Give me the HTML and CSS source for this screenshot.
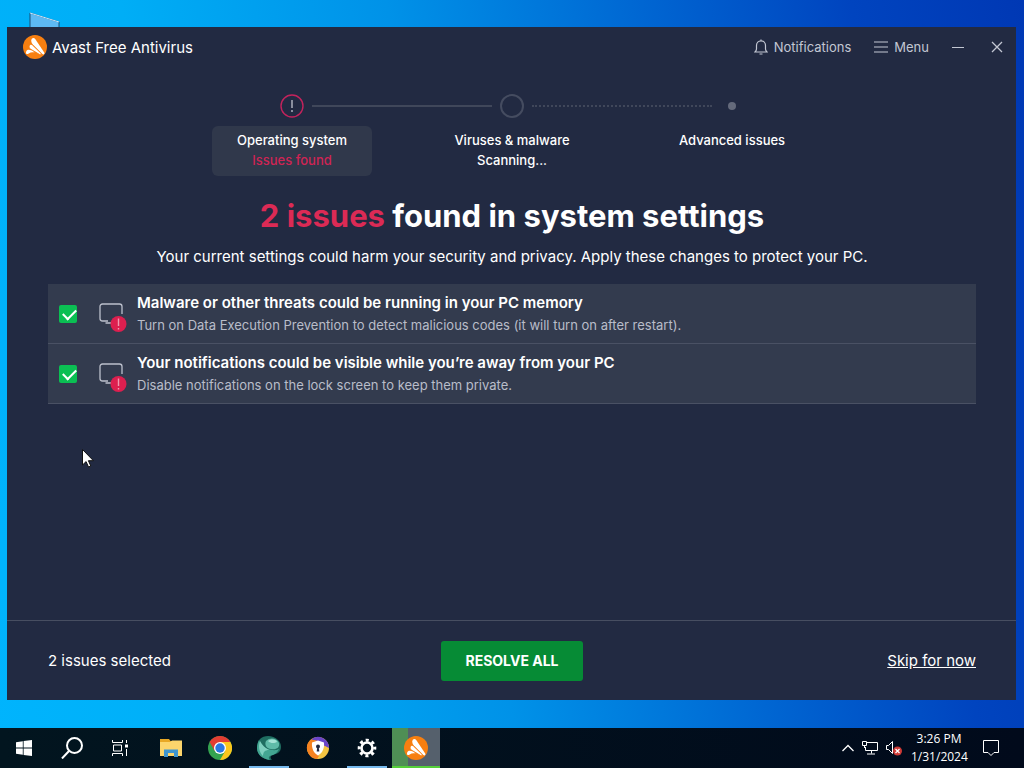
FILE: index.html
```html
<!DOCTYPE html>
<html lang="en">
<head>
    <meta charset="UTF-8">
    <meta name="viewport" content="width=device-width, initial-scale=1.0">
    <title>Avast Free Antivirus</title>
    <link rel="stylesheet" href="styles.css">
</head>
<body>
    <!-- Shared icons -->
    <svg class="sprite" aria-hidden="true">
        <symbol id="icon-avast" viewBox="0 0 24 24">
            <circle cx="12" cy="12" r="12" fill="#f77f10"/>
            <path d="M8.300 5.200c.2-2.300 2.600-3 3.900-1.200l9 13.600c.8 1.500-.6 2.400-1.800 1.500L9.600 9.200C8.500 8 8.200 6.700 8.300 5.200z" fill="#fff"/>
            <path d="M6.300 10.800c.5-1.500 2-1.700 3.100-.8l8.600 8.300c.8.900-.2 1.800-1.200 1.300L7.500 14.100c-1.200-.9-1.600-1.900-1.200-3.300z" fill="#fff" stroke="#f77f10" stroke-width=".8"/>
            <path d="M4.900 14.700c2.100-.4 5.100 1 6.800 3-2-.7-4.300-.3-6 .9-1.400.9-2.600.5-2.700-.5-.1-1.500.6-3.100 1.900-3.400z" fill="#fff"/>
        </symbol>
        <symbol id="icon-pc-alert" viewBox="0 -6 30 38">
            <path d="M9 20H3.500A2.500 2.500 0 0 1 1 17.500v-12A2.500 2.500 0 0 1 3.500 3h17A2.500 2.500 0 0 1 23 5.500V13M6.500 22H12" fill="none" stroke="#bcc0cc" stroke-width="1.300"/>
            <circle cx="19.500" cy="23" r="8" fill="#dc1f4f"/>
            <path d="M19.500 17.500v7.500M19.500 27v1.500" stroke="#f09ab0" stroke-width="1.400"/>
        </symbol>
    </svg>

    <div class="desktop">
        <svg class="desktop-icon" viewBox="0 0 32 24" aria-hidden="true">
            <path d="M1 1l29 9v14H1z" fill="#5db9f3" stroke="#1b4d74"/>
            <path d="M1 1l29 9" stroke="#c9e9ff"/>
        </svg>

        <div class="window">
            <header class="titlebar">
                <svg class="logo" aria-hidden="true"><use href="#icon-avast"/></svg>
                <span class="app-name">Avast Free Antivirus</span>
                <nav class="title-actions">
                    <button type="button" class="title-btn">
                        <svg width="14" height="16" viewBox="0 0 14 16" fill="none" stroke="currentColor" aria-hidden="true">
                            <path d="M7 .5v1.300M1 13h12c-1-1-1.500-1.800-1.500-3V6.500a4.500 4.700 0 0 0-9 0V10c0 1.200-.5 2-1.500 3zM5.500 15h3" stroke-width="1.200"/>
                        </svg>
                        Notifications
                    </button>
                    <button type="button" class="title-btn">
                        <svg width="14" height="12" viewBox="0 0 14 12" stroke="currentColor" aria-hidden="true">
                            <path d="M0 1h14M0 6h14M0 11h14" stroke-width="1.200"/>
                        </svg>
                        Menu
                    </button>
                    <button type="button" class="window-btn" aria-label="Minimize">
                        <svg width="12" height="12" viewBox="0 0 12 12" stroke="currentColor"><path d="M0 6.500h12"/></svg>
                    </button>
                    <button type="button" class="window-btn" aria-label="Close">
                        <svg width="12" height="12" viewBox="0 0 12 12" stroke="currentColor"><path d="M1 1l10 10M11 1L1 11" stroke-width="1.300"/></svg>
                    </button>
                </nav>
            </header>

            <main class="content">
                <section class="steps">
                    <div class="track">
                        <svg class="marker" viewBox="0 0 24 24" aria-hidden="true">
                            <circle cx="12" cy="12" r="11" fill="none" stroke="#c3235c" stroke-width="1.400"/>
                            <path d="M12 6v8M12 16v2" stroke="#a5a9b6" stroke-width="1.600"/>
                        </svg>
                        <span class="line"></span>
                        <svg class="marker" viewBox="0 0 24 24" aria-hidden="true">
                            <circle cx="12" cy="12" r="11" fill="none" stroke="#454c60" stroke-width="2"/>
                        </svg>
                        <span class="line dotted"></span>
                        <svg class="marker" viewBox="0 0 24 24" aria-hidden="true">
                            <circle cx="12" cy="12" r="4" fill="#646a7b"/>
                        </svg>
                    </div>
                    <ol class="labels">
                        <li class="active">Operating system<span class="status">Issues found</span></li>
                        <li>Viruses &amp; malware<span>Scanning...</span></li>
                        <li>Advanced issues</li>
                    </ol>
                </section>

                <h1><span class="count">2 issues</span> found in system settings</h1>
                <p class="lead">Your current settings could harm your security and privacy. Apply these changes to protect your PC.</p>

                <ul class="issues">
                    <li>
                        <input type="checkbox" id="issue-memory" checked>
                        <svg class="issue-icon" aria-hidden="true"><use href="#icon-pc-alert"/></svg>
                        <label for="issue-memory">
                            <strong>Malware or other threats could be running in your PC memory</strong>
                            <span>Turn on Data Execution Prevention to detect malicious codes (it will turn on after restart).</span>
                        </label>
                    </li>
                    <li>
                        <input type="checkbox" id="issue-notifications" checked>
                        <svg class="issue-icon" aria-hidden="true"><use href="#icon-pc-alert"/></svg>
                        <label for="issue-notifications">
                            <strong>Your notifications could be visible while you’re away from your PC</strong>
                            <span>Disable notifications on the lock screen to keep them private.</span>
                        </label>
                    </li>
                </ul>
            </main>

            <footer class="actions">
                <span>2 issues selected</span>
                <button type="button" class="resolve">RESOLVE ALL</button>
                <a href="#" class="skip">Skip for now</a>
            </footer>
        </div>

        <div class="taskbar">
            <button type="button" aria-label="Start">
                <svg width="16" height="16" viewBox="0 0 16 16" fill="#fff"><path d="M0 2.200l6.800-1v6.400H0zM7.600 1.100L16 0v7.600H7.600zM0 8.400h6.800v6.400l-6.800-1zM7.600 8.400H16V16l-8.400-1.100z"/></svg>
            </button>
            <button type="button" aria-label="Search">
                <svg width="22" height="22" viewBox="0 0 22 22" fill="none" stroke="#fff" stroke-width="2"><circle cx="13.500" cy="8.500" r="7.500"/><path d="M8 14l-7 7.500"/></svg>
            </button>
            <button type="button" aria-label="Task View">
                <svg width="16" height="16" viewBox="0 0 16 16" fill="none" stroke="#fff"><path d="M.5 0v2.500h10V0M.5 16v-2.500h10V16M1.500 5h8v6h-8zM14.500 0v3M14.500 9v7"/><path d="M13 4.500h3v3h-3z" fill="#fff" stroke="none"/></svg>
            </button>
            <button type="button" class="app" aria-label="File Explorer">
                <svg width="22" height="20" viewBox="0 0 22 20"><path d="M0 1h9l1.500 2H22v15H0z" fill="#e8a825"/><path d="M0 4h10l2-1.500h10V18H0z" fill="#fcd56c"/><path d="M4 11.500h14V19h-4v-4H8v4H4z" fill="#3f95cf"/></svg>
            </button>
            <button type="button" class="app" aria-label="Chrome">
                <svg width="24" height="24" viewBox="0 0 24 24"><circle cx="12" cy="12" r="12" fill="#34a350"/><path d="M12 12L1.600 6A12 12 0 0 1 22.400 6z" fill="#e23d32"/><path d="M12 6h10.400A12 12 0 0 1 12 24l5.200-9z" fill="#fbc71d"/><path d="M1.600 6L6.800 15 12 6z" fill="#e23d32"/><circle cx="12" cy="12" r="6" fill="#fff"/><circle cx="12" cy="12" r="4.700" fill="#2a78e4"/></svg>
            </button>
            <button type="button" class="app running" aria-label="Browser">
                <svg width="24" height="24" viewBox="0 0 24 24"><path d="M3 3c4-4 13-4 18 1 4 4 4 10 0 13-3 2-6 1-7 3s0 3 1 4C6 24 0 19 0 12c0-4 1-7 3-9z" fill="#1f6e61"/><path d="M9 5c4-4 11-3 13 2 1 5-3 7-8 6-4 0-7-4-5-8z" fill="#5fbba8"/><path d="M11 5c3-2 8-2 9 1-2 1-6 2-9-1z" fill="#a5e3d6"/><path d="M2 4c2 5 5 8 9 9 4 1 7 2 11 0-2 5-6 6-9 7-2 1-1 3 0 4C5 23 0 18 0 12c0-3 1-6 2-8z" fill="#43a692"/><path d="M3 5c2 4 5 7 9 9-4 0-6 2-6 6C2 16 1 10 3 5z" fill="#7fd0bf"/></svg>
            </button>
            <button type="button" class="app" aria-label="Secure Browser">
                <svg width="24" height="24" viewBox="0 0 24 24"><circle cx="12" cy="12" r="11" fill="#f4c542"/><path d="M5 3.500A11 11 0 0 1 23 12l-6-3-6-4z" fill="#6a45c8"/><path d="M5 3.500A11 11 0 0 0 11 23l2-3-6-6V7l5-2z" fill="#f58220"/><path d="M12 4.500l6 2c.5 5-1 10-6 13-5-3-6.500-8-6-13z" fill="#fff"/><circle cx="12" cy="10.500" r="2" fill="#222a42"/><path d="M11.300 11h1.400l.6 4.500h-2.600z" fill="#222a42"/></svg>
            </button>
            <button type="button" class="app running" aria-label="Settings">
                <svg width="20" height="20" viewBox="0 0 20 20" fill="none" stroke="#fff"><circle cx="10" cy="10" r="5.500" stroke-width="2.600"/><circle cx="10" cy="10" r="7.800" stroke-width="3" stroke-dasharray="3.063 3.063" stroke-dashoffset="1.531"/></svg>
            </button>
            <button type="button" class="app current" aria-label="Avast Free Antivirus">
                <svg width="24" height="24"><use href="#icon-avast"/></svg>
            </button>

            <div class="tray">
                <svg width="12" height="8" viewBox="0 0 12 8" fill="none" stroke="#fff" stroke-width="1.300" aria-hidden="true"><path d="M.5 7L6 1.500 11.500 7"/></svg>
                <svg width="16" height="14" viewBox="0 0 16 14" fill="none" stroke="#fff" aria-hidden="true"><path d="M5 1.500h10.500v8h-12V6M9.500 9.500v3M5 13h8M.5.500h4v4h-4zM2.500 4.500V7"/></svg>
                <svg width="16" height="16" viewBox="0 0 16 16" aria-hidden="true"><path d="M.5 5.500h2l4-4v12l-4-4h-2z" fill="none" stroke="#fff"/><circle cx="11.500" cy="11" r="4.500" fill="#cf3a36"/><path d="M9.500 9l4 4M13.500 9l-4 4" stroke="#fff" stroke-width="1.200"/></svg>
                <time class="clock" datetime="2024-01-31T15:26">3:26 PM<br>1/31/2024</time>
                <svg width="16" height="16" viewBox="0 0 16 16" fill="none" stroke="#fff" aria-hidden="true"><path d="M.5.500h15v12H11L8 15.500 5 12.500H.5z"/></svg>
            </div>
        </div>

        <svg class="cursor" viewBox="0 0 12 19" aria-hidden="true"><path d="M.5 1v15.500l3.600-3.400 2.400 5.400 2.300-1-2.400-5.300h5z" fill="#fff" stroke="#111"/></svg>
    </div>
</body>
</html>
```
FILE: styles.css
```css
* {
    box-sizing: border-box;
}
body {
    margin: 0;
    font-family: Inter, "Liberation Sans", sans-serif;
    font-size: 15px;
    color: #fff;
}
button {
    padding: 0;
    border: none;
    background: none;
    color: inherit;
    font: inherit;
    cursor: pointer;
}
ul, ol {
    list-style: none;
    margin: 0;
    padding: 0;
}
.sprite {
    position: absolute;
    width: 0;
    height: 0;
}

/* Desktop */
.desktop {
    position: relative;
    display: flex;
    flex-direction: column;
    min-height: 100vh;
    background: linear-gradient(80deg, #00b4fd 0%, #00aef6 22%, #0092e8 45%, #0066d2 67%, #0044bf 85%, #0038b4 100%);
}
.desktop-icon {
    position: absolute;
    left: 29px;
    top: 12px;
    width: 32px;
    height: 24px;
}
.cursor {
    position: absolute;
    left: 82px;
    top: 448px;
    width: 12px;
    height: 20px;
}

/* App window */
.window {
    position: relative;
    flex: 1;
    display: flex;
    flex-direction: column;
    margin: 27px 8px 28px 7px;
    background-color: #222a42;
}
.titlebar {
    display: flex;
    align-items: center;
    height: 40px;
    padding: 0 13px 0 16px;
}
.logo {
    width: 24px;
    height: 24px;
    margin-right: 5px;
}
.title-actions {
    display: flex;
    align-items: center;
    margin-left: auto;
    color: #c3c7d3;
    font-size: 13px;
}
.title-btn {
    display: flex;
    align-items: center;
    gap: 6px;
    margin-right: 23px;
}
.window-btn {
    display: flex;
    margin-left: 27px;
}
.title-btn + .window-btn {
    margin-left: 0;
}

.content {
    flex: 1;
    padding: 27px 40px 24px 41px;
    text-align: center;
}
.track {
    display: flex;
    align-items: center;
    gap: 8px;
    width: 464px;
    margin: 0 auto 8px;
}
.marker {
    width: 24px;
    height: 24px;
}
.line {
    flex: 1;
    border-top: 2px solid #40475a;
}
.line.dotted {
    border-top-style: dotted;
}
.labels {
    display: grid;
    grid-template-columns: repeat(3, 160px);
    gap: 60px;
    justify-content: center;
    font-size: 13px;
    font-weight: 500;
    line-height: 20px;
}
.labels li {
    padding: 4px 0 6px;
    border-radius: 6px;
}
.labels span {
    display: block;
}
.labels .active {
    background-color: #30384b;
}
.labels .status {
    color: #cf2454;
}
h1 {
    margin: 20px 0 0;
    font-size: 31px;
    line-height: 40px;
}
.count {
    color: #dc2a55;
}
.lead {
    margin: 11px 0 17px;
    line-height: 20px;
}
.issues {
    text-align: left;
}
.issues li {
    display: flex;
    align-items: center;
    height: 60px;
    padding-left: 11px;
    background-color: #333b4e;
    border-bottom: 1px solid #4a5164;
}
.issues input {
    appearance: none;
    width: 18px;
    height: 18px;
    margin: 0;
    border-radius: 2px;
    background-color: #0bbf53;
}
.issues input:checked::before {
    content: "";
    display: block;
    width: 11px;
    height: 6px;
    margin: 4px;
    border: solid #fff;
    border-width: 0 0 2px 2px;
    transform: rotate(-45deg);
}
.issue-icon {
    width: 30px;
    height: 38px;
    margin: 0 8px 0 22px;
}
.issues strong {
    display: block;
    font-weight: 600;
    line-height: 22px;
}
.issues span {
    display: block;
    color: #b9bdc9;
    font-size: 13px;
    line-height: 22px;
}

.actions {
    display: grid;
    grid-template-columns: 1fr auto 1fr;
    align-items: center;
    height: 80px;
    padding: 0 40px 0 41px;
    border-top: 1px solid #474e61;
}
.resolve {
    width: 142px;
    height: 40px;
    border-radius: 3px;
    background-color: #068b35;
    font-size: 14px;
    font-weight: 700;
}
.skip {
    justify-self: end;
    color: #fff;
}

/* Taskbar */
.taskbar {
    display: flex;
    height: 40px;
    background: linear-gradient(90deg, #02151f, #010a1b);
}
.taskbar button {
    display: flex;
    align-items: center;
    justify-content: center;
    width: 48px;
}
.taskbar .app {
    margin-left: 1px;
}
.taskbar button + .app:nth-child(4) {
    margin-left: 3px;
}
.running {
    background: linear-gradient(#76b9ed, #76b9ed) center bottom / 40px 2px no-repeat;
}
.current {
    background:
        linear-gradient(#55cf3a, #55cf3a) center bottom / 100% 2px no-repeat,
        linear-gradient(90deg, #4f8f55 16px, #55606c 16px);
}
.tray {
    display: flex;
    align-items: center;
    gap: 8px;
    margin-left: auto;
    padding-right: 25px;
}
.clock {
    width: 56px;
    margin: 0 8px 0 1px;
    font: 12px/18px "Open Sans", sans-serif;
    text-align: center;
}
```
